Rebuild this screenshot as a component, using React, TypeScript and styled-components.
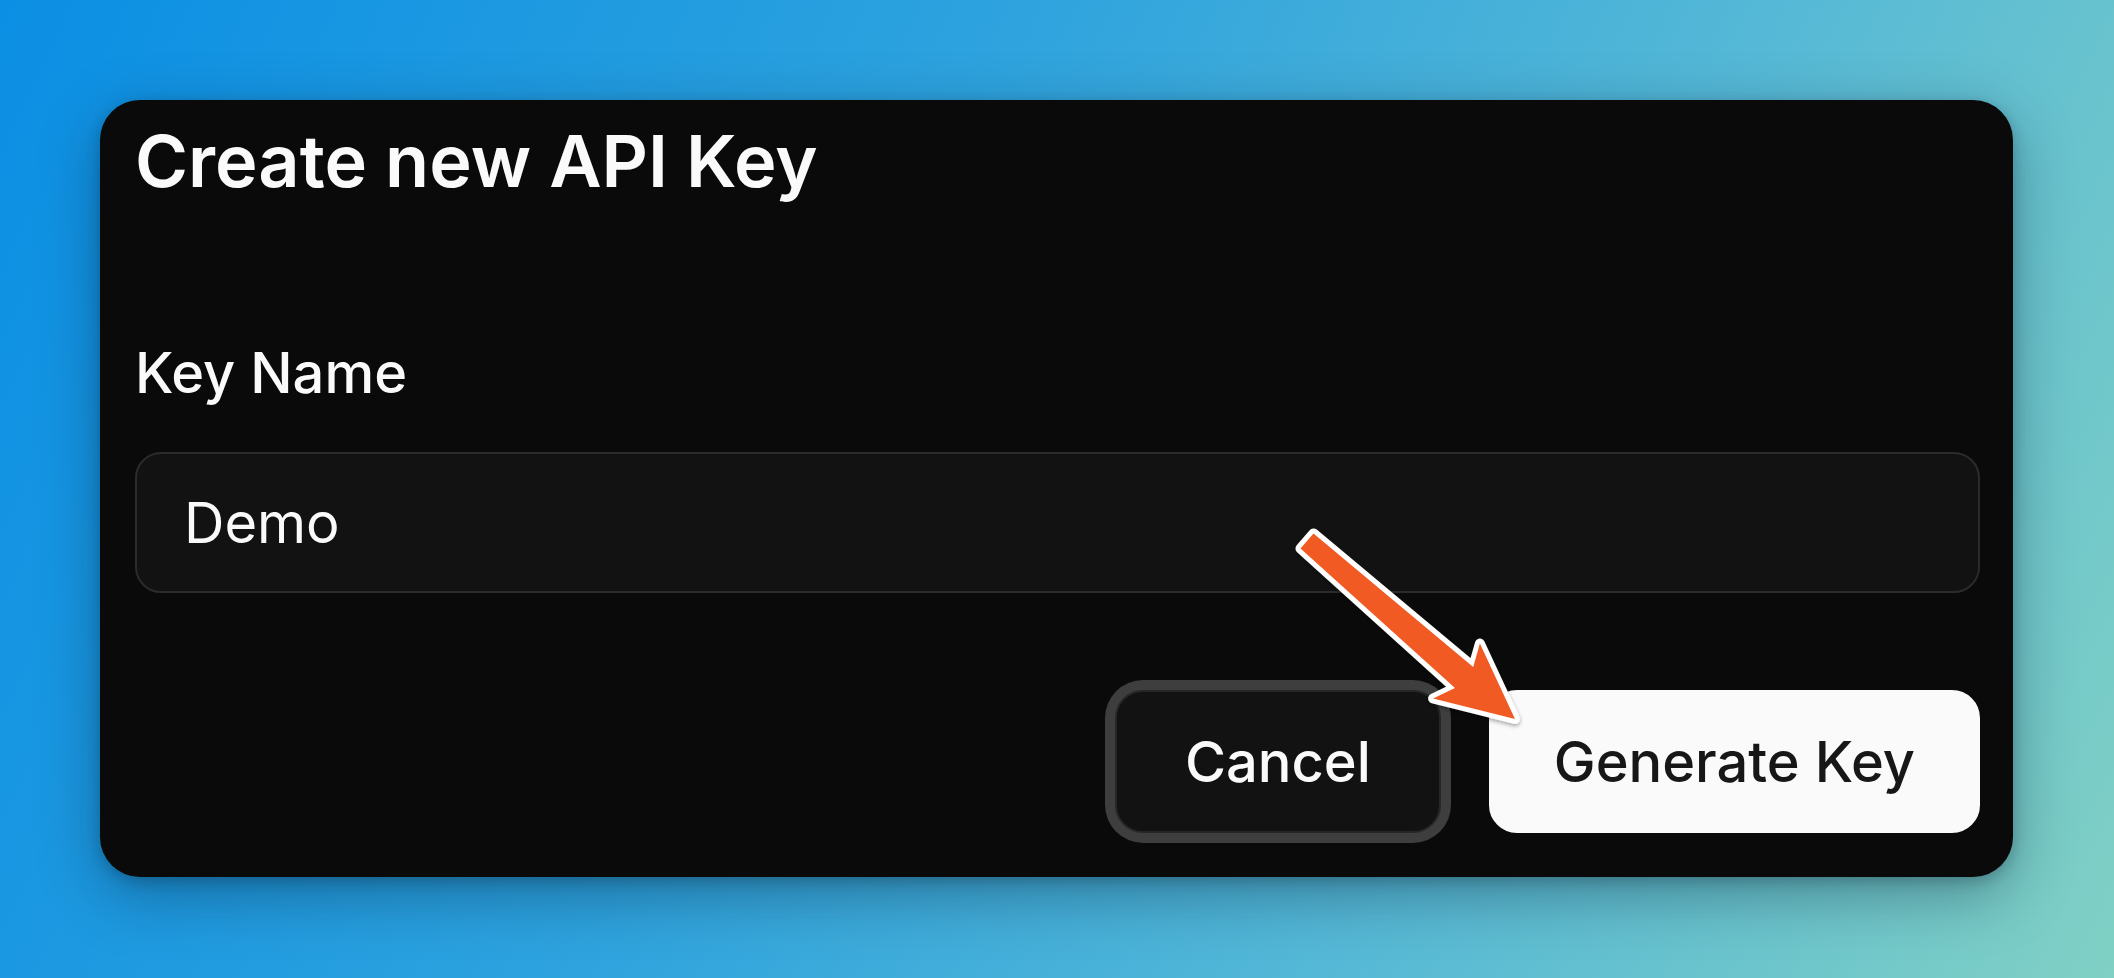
import React from "react";
import styled, { createGlobalStyle } from "styled-components";

const GlobalStyle = createGlobalStyle`
  html, body { margin: 0; padding: 0; }
  body { font-family: Inter, "Noto Sans", sans-serif; }
  * { box-sizing: border-box; }
`;

const Page = styled.div`
  position: relative;
  width: 2114px;
  height: 978px;
  padding: 100px 101px 101px 100px;
  background: linear-gradient(115deg, #0b8fe4 0%, #2ea3de 40%, #56b9d6 70%, #80d0c4 100%);
  overflow: hidden;
`;

const Card = styled.div`
  display: flex;
  flex-direction: column;
  height: 777px;
  padding: 25px 33px 44px 35px;
  background: #0a0a0a;
  border-radius: 40px;
  box-shadow: 0 18px 60px rgba(0, 20, 40, 0.35), 0 4px 14px rgba(0, 0, 0, 0.2);
`;

const Title = styled.h2`
  margin: 0;
  font-family: Inter, sans-serif;
  font-size: 72px;
  font-weight: 600;
  line-height: 72px;
  letter-spacing: 0;
  color: #fafafa;
`;

const Field = styled.div`
  display: flex;
  flex-direction: column;
  gap: 51px;
  margin-top: 148px;
`;

const Label = styled.label`
  font-family: Inter, sans-serif;
  font-size: 56px;
  font-weight: 500;
  line-height: 56px;
  color: #fafafa;
`;

const Input = styled.div`
  display: flex;
  align-items: center;
  height: 141px;
  padding: 0 47px;
  background: #121212;
  border: 2px solid #2b2b2b;
  border-radius: 26px;
  font-family: Inter, sans-serif;
  font-size: 56px;
  font-weight: 400;
  color: #fafafa;
`;

const Actions = styled.div`
  display: flex;
  justify-content: flex-end;
  gap: 48px;
  margin-top: 97px;
`;

const Button = styled.button<{ $primary?: boolean }>`
  height: 143px;
  padding: 0 ${(p) => (p.$primary ? "63px" : "68px")};
  border-radius: 28px;
  font-family: Inter, sans-serif;
  font-size: 56px;
  font-weight: 500;
  cursor: pointer;
  background: ${(p) => (p.$primary ? "#fafafa" : "#121212")};
  color: ${(p) => (p.$primary ? "#171717" : "#fafafa")};
  border: 2px solid ${(p) => (p.$primary ? "#fafafa" : "#262626")};
  box-shadow: ${(p) => (p.$primary ? "none" : "0 0 0 10px #3e3e3e")};
`;

const ArrowLayer = styled.svg`
  position: absolute;
  left: 0;
  top: 0;
  width: 2114px;
  height: 978px;
  pointer-events: none;
`;

export default function App() {
  const pts = [
    [1313.5, 533.4],
    [1473.2, 666.9],
    [1479.9, 643.6],
    [1515, 719],
    [1433.1, 698.4],
    [1455, 688.1],
    [1300.5, 548.6],
  ]
    .map((p) => p.join(","))
    .join(" ");
  return (
    <>
      <GlobalStyle />
      <Page>
        <Card>
          <Title>Create new API Key</Title>
          <Field>
            <Label>Key Name</Label>
            <Input>Demo</Input>
          </Field>
          <Actions>
            <Button>Cancel</Button>
            <Button $primary>Generate Key</Button>
          </Actions>
        </Card>
        <ArrowLayer viewBox="0 0 2114 978">
          <defs>
            <filter id="ash" x="-20%" y="-20%" width="140%" height="140%">
              <feDropShadow dx="0" dy="2" stdDeviation="2" floodColor="#000" floodOpacity="0.35" />
            </filter>
          </defs>
          <polygon
            points={pts}
            fill="#f15a24"
            stroke="#ffffff"
            strokeWidth={10}
            strokeLinejoin="round"
            paintOrder="stroke"
            filter="url(#ash)"
          />
        </ArrowLayer>
      </Page>
    </>
  );
}
